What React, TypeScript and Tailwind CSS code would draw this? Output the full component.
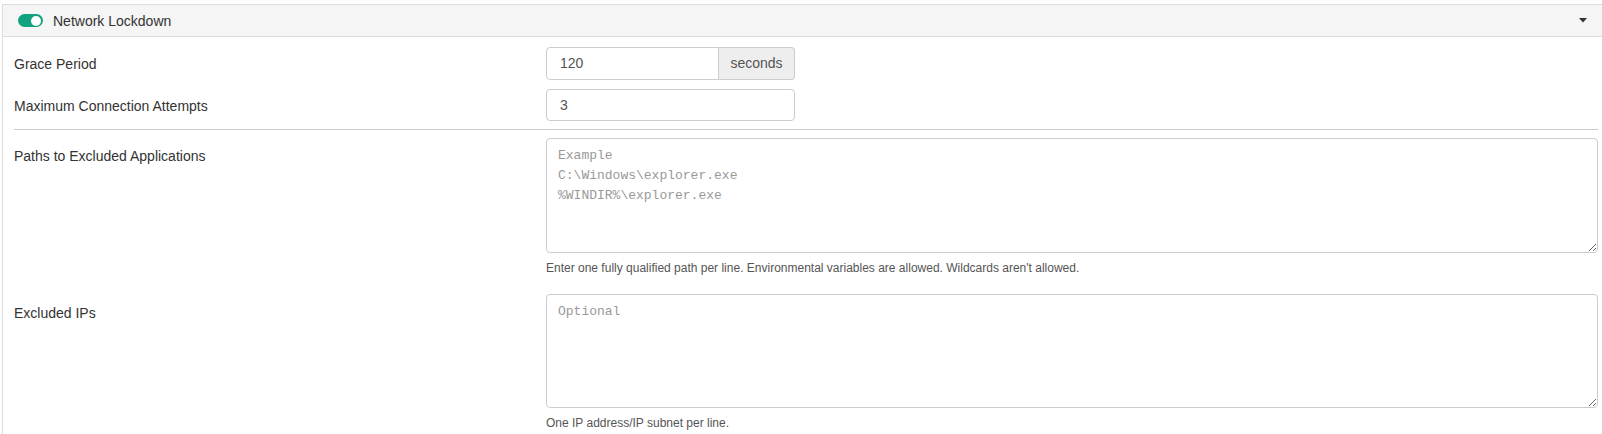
export default function App() {
  const font = { fontFamily: '"Liberation Sans", Arial, sans-serif' };
  const mono = { fontFamily: '"Liberation Mono", "DejaVu Sans Mono", monospace' };
  return (
    <div className="min-h-screen bg-white pl-[2px] pt-[4px] text-[#333]" style={font}>
      <div className="border-l border-t border-[#ddd]">
        <div className="flex h-[32px] items-center border-b border-[#ddd] bg-[#f5f5f5] pl-[15px] pr-[15px]">
          <span className="relative inline-block h-[13px] w-[25px] rounded-full bg-[#10a37d]">
            <span className="absolute right-[2px] top-[1.5px] h-[10px] w-[10px] rounded-full bg-white" />
          </span>
          <span className="ml-[10px] text-[14px] leading-none">Network Lockdown</span>
          <svg className="ml-auto" width="8" height="5" viewBox="0 0 8 5">
            <path d="M0 0h8L4 4.5z" fill="#333" />
          </svg>
        </div>
        <div className="pb-[4px] pl-[11px] pr-[4px] pt-[10px] text-[14px]">
          <div className="grid grid-cols-[532px_1fr] items-center">
            <div className="pt-[2px]">Grace Period</div>
            <div className="flex h-[33px] w-[249px]">
              <input
                defaultValue="120"
                className="min-w-0 flex-1 rounded-l-[4px] border border-[#ccc] px-[13px] text-[14px] text-[#555] outline-none"
              />
              <span className="flex w-[76px] items-center justify-center rounded-r-[4px] border border-l-0 border-[#ccc] bg-[#eee] text-[14px] text-[#555]">
                seconds
              </span>
            </div>
          </div>
          <div className="mt-[9px] grid grid-cols-[532px_1fr] items-center">
            <div className="pt-[2px]">Maximum Connection Attempts</div>
            <input
              defaultValue="3"
              className="h-[32px] w-[249px] rounded-[4px] border border-[#ccc] px-[13px] text-[14px] text-[#555] outline-none"
            />
          </div>
          <div className="mt-[8px] border-t border-[#ccc]" />
          <div className="mt-[8px] grid grid-cols-[532px_1fr]">
            <div className="pt-[8px]">Paths to Excluded Applications</div>
            <div>
              <textarea
                placeholder={'Example\nC:\\Windows\\explorer.exe\n%WINDIR%\\explorer.exe'}
                className="block h-[115px] w-full rounded-[4px] border border-[#ccc] py-[7px] pl-[11px] pr-[12px] text-[13px] leading-[20px] text-[#555] outline-none placeholder:text-[#999]"
                style={mono}
              />
              <p className="mt-[7px] text-[12px] leading-[17px] text-[#555]">
                Enter one fully qualified path per line. Environmental variables are allowed. Wildcards aren't allowed.
              </p>
            </div>
          </div>
          <div className="mt-[17px] grid grid-cols-[532px_1fr]">
            <div className="pt-[9px]">Excluded IPs</div>
            <div>
              <textarea
                placeholder="Optional"
                className="block h-[114px] w-full rounded-[4px] border border-[#ccc] py-[7px] pl-[11px] pr-[12px] text-[13px] leading-[20px] text-[#555] outline-none placeholder:text-[#999]"
                style={mono}
              />
              <p className="mt-[7px] text-[12px] leading-[17px] text-[#555]">One IP address/IP subnet per line.</p>
            </div>
          </div>
        </div>
      </div>
    </div>
  );
}
